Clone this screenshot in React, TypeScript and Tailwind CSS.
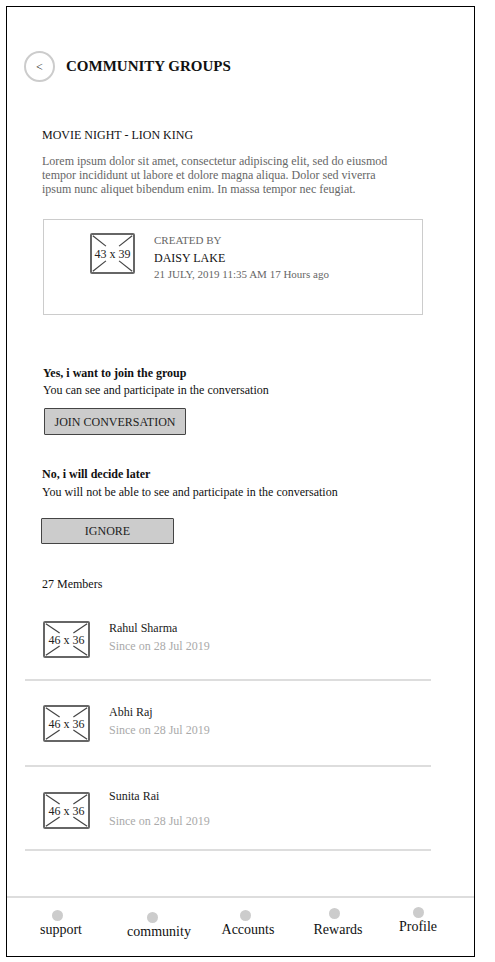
import React from "react";

const serif = { fontFamily: '"Liberation Serif", "Times New Roman", serif' };

function Placeholder({ w, h, label }: { w: number; h: number; label: string }) {
  return (
    <div
      className="relative shrink-0 border-2 border-[#666] rounded-[2px] flex items-center justify-center bg-white"
      style={{ width: w, height: h }}
    >
      <svg className="absolute inset-0 w-full h-full" viewBox="0 0 100 100" preserveAspectRatio="none">
        <g stroke="#444" strokeWidth="1.2">
          <line x1="2" y1="2" x2="34" y2="30" vectorEffect="non-scaling-stroke" />
          <line x1="98" y1="2" x2="66" y2="30" vectorEffect="non-scaling-stroke" />
          <line x1="2" y1="98" x2="34" y2="70" vectorEffect="non-scaling-stroke" />
          <line x1="98" y1="98" x2="66" y2="70" vectorEffect="non-scaling-stroke" />
        </g>
      </svg>
      <span className="relative text-[12px] leading-[14px] text-[#222]">{label}</span>
    </div>
  );
}

const members = [
  { name: "Rahul Sharma", gapTop: "mt-[30px]", nameMt: "mt-0", sinceMt: "mt-[4px]", sepMt: "mt-[21px]" },
  { name: "Abhi Raj", gapTop: "mt-[24px]", nameMt: "mt-0", sinceMt: "mt-[4px]", sepMt: "mt-[23px]" },
  { name: "Sunita Rai", gapTop: "mt-[25px]", nameMt: "-mt-[3px]", sinceMt: "mt-[11px]", sepMt: "mt-[20px]" },
];

const nav = [
  { label: "support", w: "w-[108px]", dot: "-ml-[8px]", dotMt: "mt-[12px]", gap: "mt-[1px]" },
  { label: "community", w: "w-[88px]", dot: "-ml-[14px]", dotMt: "mt-[14px]", gap: "mt-[1px]" },
  { label: "Accounts", w: "w-[90px]", dot: "-ml-[6px]", dotMt: "mt-[12px]", gap: "mt-[1px]" },
  { label: "Rewards", w: "w-[90px]", dot: "-ml-[8px]", dotMt: "mt-[10px]", gap: "mt-[3px]" },
  { label: "Profile", w: "w-[70px]", dot: "ml-0", dotMt: "mt-[9px]", gap: "mt-[1px]" },
];

export default function App() {
  return (
    <div className="w-[495px] h-[962px] bg-white pt-[6px] pl-[6px]" style={serif}>
      <div className="w-[469px] h-[951px] border border-black flex flex-col text-[#111]">
        {/* header */}
        <div className="pt-[44px] pl-[17px] flex items-center gap-[11px]">
          <div className="w-[31px] h-[31px] rounded-full border-2 border-[#ccc] flex items-center justify-center text-[12px] text-[#222]">
            &lt;
          </div>
          <h1 className="text-[15px] font-bold tracking-normal">COMMUNITY GROUPS</h1>
        </div>

        <div className="pl-[35px] flex flex-col items-start">
          <div className="mt-[46px] text-[12px] leading-[14px]">MOVIE NIGHT - LION KING</div>
          <p className="mt-[12px] w-[352px] text-[12px] leading-[14px] text-[#666]">
            Lorem ipsum dolor sit amet, consectetur adipiscing elit, sed do eiusmod tempor incididunt ut labore et
            dolore magna aliqua. Dolor sed viverra ipsum nunc aliquet bibendum enim. In massa tempor nec feugiat.
          </p>

          {/* creator card */}
          <div className="mt-[23px] ml-[1px] w-[380px] h-[96px] border border-[#ccc] flex items-start pt-[13px] pl-[46px] gap-[19px]">
            <Placeholder w={45} h={41} label="43 x 39" />
            <div className="flex flex-col pt-[1px]">
              <span className="text-[11px] leading-[13px] text-[#666]">CREATED BY</span>
              <span className="mt-[4px] text-[12px] leading-[14px] text-[#111]">DAISY LAKE</span>
              <span className="mt-[3px] text-[11px] leading-[13px] text-[#666]">21 JULY, 2019 11:35 AM 17 Hours ago</span>
            </div>
          </div>

          <div className="mt-[51px] ml-[1px] text-[12px] leading-[14px] font-bold">Yes, i want to join the group</div>
          <div className="mt-[3px] ml-[1px] text-[12px] leading-[14px]">You can see and participate in the conversation</div>
          <button className="mt-[11px] ml-[2px] w-[142px] h-[27px] bg-[#ccc] border border-[#444] rounded-[1px] text-[12px] text-[#222]">
            JOIN CONVERSATION
          </button>

          <div className="mt-[32px] text-[12px] leading-[14px] font-bold">No, i will decide later</div>
          <div className="mt-[4px] text-[12px] leading-[14px]">You will not be able to see and participate in the conversation</div>
          <button className="mt-[19px] -ml-[1px] w-[133px] h-[26px] bg-[#ccc] border border-[#444] rounded-[1px] text-[12px] text-[#222]">
            IGNORE
          </button>

          <div className="mt-[33px] text-[12px] leading-[14px]">27 Members</div>

          {members.map((m) => (
            <React.Fragment key={m.name}>
              <div className={`${m.gapTop} ml-[1px] flex items-start gap-[19px]`}>
                <Placeholder w={47} h={37} label="46 x 36" />
                <div className={`flex flex-col ${m.nameMt}`}>
                  <span className="text-[12px] leading-[14px] text-[#222]">{m.name}</span>
                  <span className={`${m.sinceMt} text-[12px] leading-[14px] text-[#aaa]`}>Since on 28 Jul 2019</span>
                </div>
              </div>
              <div className={`${m.sepMt} -ml-[17px] w-[406px] h-[2px] bg-[#ddd]`} />
            </React.Fragment>
          ))}
        </div>

        {/* bottom nav */}
        <div className="mt-auto h-[60px] border-t-2 border-[#ddd] flex">
          {nav.map((n) => (
            <div key={n.label} className={`${n.w} flex flex-col items-center`}>
              <div className={`${n.dotMt} ${n.dot} w-[11px] h-[11px] rounded-full bg-[#ccc]`} />
              <span className={`${n.gap} text-[14px] leading-[16px] text-[#111]`}>{n.label}</span>
            </div>
          ))}
        </div>
      </div>
    </div>
  );
}
